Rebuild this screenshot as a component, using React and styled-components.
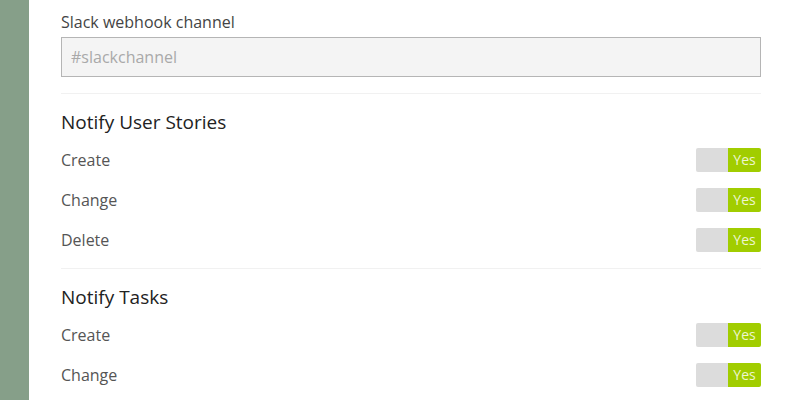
import React from "react";
import styled, { createGlobalStyle } from "styled-components";

const Global = createGlobalStyle`
  html, body { margin: 0; padding: 0; background: #fff; }
  body { font-family: "Open Sans", sans-serif; color: #444; }
`;

const Page = styled.div`
  display: flex;
  width: 800px;
  height: 400px;
  overflow: hidden;
`;

const Sidebar = styled.div`
  width: 29px;
  flex: none;
  background: #869f89;
`;

const Main = styled.div`
  flex: none;
  width: 700px;
  padding: 11px 0 0 32px;
`;

const Label = styled.label`
  display: block;
  font-size: 16px;
  line-height: 22px;
  color: #444;
  margin-bottom: 4px;
`;

const Input = styled.input`
  box-sizing: border-box;
  display: block;
  width: 700px;
  height: 40px;
  margin: 0;
  border: 1px solid #b5b5b5;
  background: #f4f4f4;
  padding: 0 9px;
  font-family: "Open Sans", sans-serif;
  font-size: 16px;
  color: #444;
  outline: none;
  &::placeholder { color: #a9a9a9; }
`;

const Divider = styled.hr`
  border: 0;
  border-top: 1px solid #f1f1f1;
  margin: ${p => p.$top}px 0 0 0;
`;

const Heading = styled.h2`
  margin: 14px 0 4px 0;
  font-size: 19px;
  font-weight: 400;
  line-height: 28px;
  color: #222;
`;

const Row = styled.div`
  display: flex;
  align-items: center;
  justify-content: space-between;
  height: 40px;
`;

const RowLabel = styled.span`
  font-size: 16px;
  color: #555;
`;

const Toggle = styled.div`
  display: flex;
  width: 65px;
  height: 24px;
  border-radius: 2px;
  overflow: hidden;
`;

const Off = styled.div`
  width: 32px;
  background: #dcdcdc;
`;

const On = styled.div`
  flex: 1;
  background: #a1cd00;
  color: #eef6d0;
  font-size: 14px;
  line-height: 24px;
  text-align: center;
`;

const Section = ({ title, items, top }) => (
  <>
    <Divider $top={top} />
    <Heading>{title}</Heading>
    {items.map(i => (
      <Row key={i}>
        <RowLabel>{i}</RowLabel>
        <Toggle><Off /><On>Yes</On></Toggle>
      </Row>
    ))}
  </>
);

export default function App() {
  return (
    <Page>
      <Global />
      <Sidebar />
      <Main>
        <Label>Slack webhook channel</Label>
        <Input placeholder="#slackchannel" readOnly />
        <Section top={16} title="Notify User Stories" items={["Create", "Change", "Delete"]} />
        <Section top={8} title="Notify Tasks" items={["Create", "Change"]} />
      </Main>
    </Page>
  );
}
